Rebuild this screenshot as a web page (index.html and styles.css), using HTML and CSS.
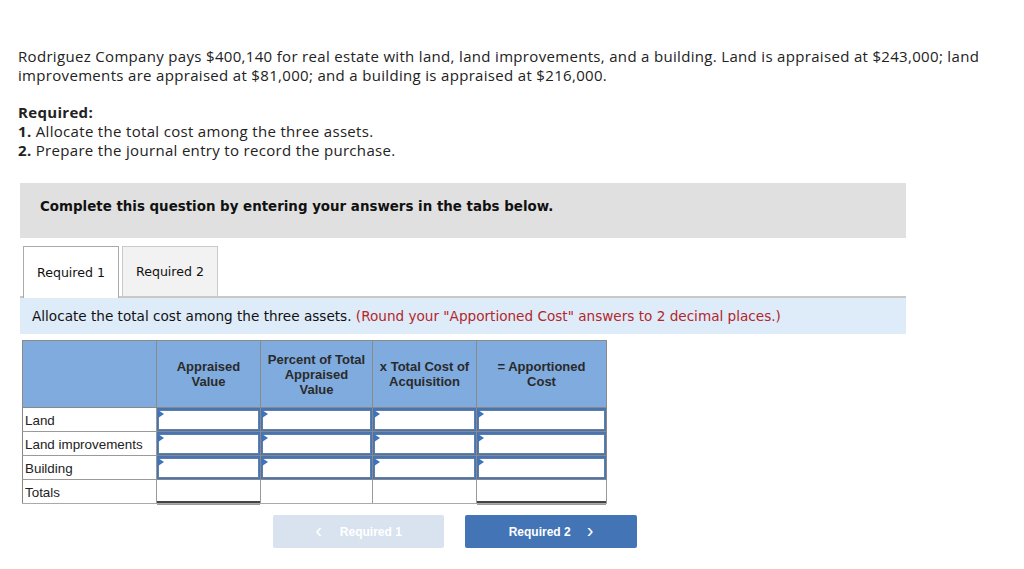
FILE: index.html
```html
<!DOCTYPE html>
<html>
<head>
<meta charset="utf-8">
<link rel="stylesheet" href="styles.css">
</head>
<body>
<div class="page">
  <p class="intro">Rodriguez Company pays $400,140 for real estate with land, land improvements, and a building. Land is appraised at $243,000; land improvements are appraised at $81,000; and a building is appraised at $216,000.</p>
  <div class="req">
    <div class="req-title">Required:</div>
    <div><b>1.</b> Allocate the total cost among the three assets.</div>
    <div><b>2.</b> Prepare the journal entry to record the purchase.</div>
  </div>
  <div class="section">
    <div class="banner">Complete this question by entering your answers in the tabs below.</div>
    <div class="tabs">
      <div class="tab active">Required 1</div>
      <div class="tab">Required 2</div>
    </div>
    <div class="instr">Allocate the total cost among the three assets. <span class="red">(Round your "Apportioned Cost" answers to 2 decimal places.)</span></div>
    <table class="grid">
      <colgroup>
        <col class="c1"><col class="c2"><col class="c3"><col class="c4"><col class="c5">
      </colgroup>
      <thead>
        <tr>
          <th></th>
          <th>Appraised<br>Value</th>
          <th>Percent of Total<br>Appraised<br>Value</th>
          <th>x Total Cost of<br>Acquisition</th>
          <th>= Apportioned<br>Cost</th>
        </tr>
      </thead>
      <tbody>
        <tr>
          <td class="lbl">Land</td>
          <td class="in"><div class="box"></div></td>
          <td class="in"><div class="box"></div></td>
          <td class="in"><div class="box"></div></td>
          <td class="in"><div class="box"></div></td>
        </tr>
        <tr>
          <td class="lbl">Land improvements</td>
          <td class="in"><div class="box"></div></td>
          <td class="in"><div class="box"></div></td>
          <td class="in"><div class="box"></div></td>
          <td class="in"><div class="box"></div></td>
        </tr>
        <tr>
          <td class="lbl">Building</td>
          <td class="in"><div class="box"></div></td>
          <td class="in"><div class="box"></div></td>
          <td class="in"><div class="box"></div></td>
          <td class="in"><div class="box"></div></td>
        </tr>
        <tr class="totals">
          <td class="lbl">Totals</td>
          <td class="tot"><div class="tbox"></div></td>
          <td class="plain"></td>
          <td class="plain"></td>
          <td class="tot"><div class="tbox"></div></td>
        </tr>
      </tbody>
    </table>
    <div class="nav">
      <div class="btn prev"><span class="chev">&lsaquo;</span>Required 1</div>
      <div class="btn next">Required 2<span class="chev r">&rsaquo;</span></div>
    </div>
  </div>
</div>
</body>
</html>
```

FILE: styles.css
```css
html, body {
  margin: 0;
  padding: 0;
  background: #fff;
}
.page {
  padding: 47px 0 0 18px;
  font-family: "Open Sans", "Liberation Sans", sans-serif;
  font-size: 15px;
  letter-spacing: 0.32px;
  color: #222;
}
.intro {
  margin: 0;
  line-height: 19px;
  width: 990px;
}
.req {
  margin-top: 18px;
  line-height: 19px;
}
.req-title, .req b {
  font-weight: 700;
}
.section {
  margin-top: 23px;
  margin-left: 2px;
  width: 886px;
  letter-spacing: 0;
}
.banner {
  background: #e0e0e0;
  height: 55px;
  box-sizing: border-box;
  padding-left: 20px;
  padding-bottom: 9px;
  display: flex;
  align-items: center;
  font-family: "DejaVu Sans", Verdana, sans-serif;
  font-weight: 700;
  font-size: 13.4px;
  color: #111;
}
.tabs {
  margin-top: 8px;
  display: flex;
  gap: 3px;
  padding-left: 3px;
  border-bottom: 2px solid #c8c8c8;
}
.tab {
  width: 96px;
  height: 50px;
  box-sizing: border-box;
  border: 1px solid #c9c9c9;
  border-bottom: none;
  background: #f2f2f2;
  font-family: "DejaVu Sans", Verdana, sans-serif;
  font-size: 12.6px;
  color: #111;
  display: flex;
  align-items: center;
  justify-content: center;
  margin-bottom: -2px;
}
.tab.active {
  background: #fff;
  border-color: #aaa;
  height: 52px;
}
.instr {
  background: #deebf8;
  height: 36px;
  box-sizing: border-box;
  padding-left: 12px;
  padding-bottom: 1px;
  display: flex;
  align-items: center;
  font-family: "DejaVu Sans", Verdana, sans-serif;
  font-size: 13.6px;
  color: #111;
  white-space: pre;
}
.red {
  color: #b3262b;
}
.grid {
  margin-top: 6px;
  margin-left: 2px;
  border-collapse: collapse;
  font-family: "Liberation Sans", Arial, sans-serif;
  font-size: 13.4px;
  color: #222;
}
.c1 { width: 134px; }
.c2 { width: 104px; }
.c3 { width: 112px; }
.c4 { width: 104px; }
.c5 { width: 130px; }
.grid th {
  background: #7fabdf;
  border: 1px solid #8a8a8a;
  height: 66px;
  padding: 0;
  font-weight: 700;
  font-size: 13px;
  color: #2a2a2a;
  line-height: 15px;
  vertical-align: middle;
}
.grid td {
  height: 24px;
  padding: 0;
  border: 1px solid #9a9a9a;
  box-sizing: border-box;
}
.grid td.lbl {
  padding-left: 2px;
  padding-top: 1px;
  border-left: 1px solid #888;
}
.grid td.in {
  background: #4b74ad;
  padding: 1px;
  border: 1px solid #888;
  position: relative;
}
.box {
  height: 20px;
  background: #fff;
  border: 1px solid #5a7fb6;
  box-sizing: border-box;
  position: relative;
}
.box::before {
  content: "";
  position: absolute;
  left: -1px;
  top: -1px;
  border-left: 6px solid #3f72bd;
  border-top: 4px solid transparent;
  border-bottom: 4px solid transparent;
}
.grid td.tot {
  padding: 0;
  border-top: 1px solid #333;
}
.tbox {
  height: 21px;
  border-bottom: 2px solid #444;
  box-shadow: 0 2px 0 #999;
}
.grid tr.totals td {
  border-bottom: 1px solid #aaa;
}
.nav {
  display: flex;
  gap: 21px;
  margin-top: 11px;
  padding-left: 253px;
}
.btn {
  width: 171px;
  height: 33px;
  border-radius: 2px;
  display: flex;
  align-items: center;
  justify-content: center;
  font-family: "Liberation Sans", Arial, sans-serif;
  font-weight: 700;
  font-size: 12px;
  color: #fff;
}
.btn.prev {
  background: #d9e3ef;
}
.btn.next {
  background: #4374b6;
  width: 172px;
}
.chev {
  font-size: 20px;
  font-weight: 400;
  margin-right: 18px;
  line-height: 1;
  position: relative;
  top: -2px;
}
.chev.r {
  margin-right: 0;
  margin-left: 16px;
}
```
